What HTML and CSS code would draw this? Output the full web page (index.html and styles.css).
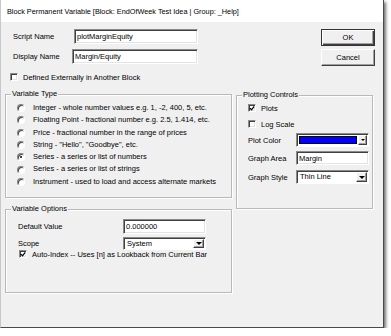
FILE: index.html
```html
<!DOCTYPE html>
<html lang="en">
<head>
  <meta charset="UTF-8">
  <title>Block Permanent Variable</title>
  <link rel="stylesheet" href="styles.css">
</head>
<body>

  <div class="dialog">
    <!-- Title Bar -->
    <div class="titlebar">Block Permanent Variable [Block: EndOfWeek Test Idea | Group: _Help]</div>

    <div class="client">
      <!-- Names + OK/Cancel -->
      <div class="top">
        <div class="names">
          <div class="field script">
            <label class="field-label">Script Name</label>
            <input class="textbox" type="text" value="plotMarginEquity">
          </div>
          <div class="field display">
            <label class="field-label">Display Name</label>
            <input class="textbox" type="text" value="Margin/Equity">
          </div>
        </div>
        <div class="buttons">
          <button class="btn default">OK</button>
          <button class="btn">Cancel</button>
        </div>
      </div>

      <div class="check-row external">
        <span class="checkbox"></span>
        <span>Defined Externally in Another Block</span>
      </div>

      <div class="columns">
        <div class="col-left">
          <!-- Variable Type -->
          <div class="group vtype">
            <div class="group-title">Variable Type</div>
            <ul class="radios">
              <li><span class="radio"></span>Integer - whole number values e.g. 1, -2, 400, 5, etc.</li>
              <li><span class="radio"></span>Floating Point - fractional number e.g. 2.5, 1.414, etc.</li>
              <li><span class="radio"></span>Price - fractional number in the range of prices</li>
              <li><span class="radio"></span>String - "Hello", "Goodbye", etc.</li>
              <li><span class="radio on"></span>Series - a series or list of numbers</li>
              <li><span class="radio"></span>Series - a series or list of strings</li>
              <li><span class="radio"></span>Instrument - used to load and access alternate markets</li>
            </ul>
          </div>

          <!-- Variable Options -->
          <div class="group vopts">
            <div class="group-title">Variable Options</div>
            <div class="opt-row default-row">
              <span class="opt-label">Default Value</span>
              <input class="textbox" type="text" value="0.000000">
            </div>
            <div class="opt-row scope-row">
              <span class="opt-label">Scope</span>
              <div class="combo">
                <span class="combo-text">System</span>
                <span class="drop"><span class="arrow"></span></span>
              </div>
            </div>
            <div class="check-row auto">
              <span class="checkbox checked">
                <svg viewBox="0 0 7 7" width="7" height="7"><path d="M1 3 L3 5 L6 1" fill="none" stroke="#000" stroke-width="1.4"/></svg>
              </span>
              <span>Auto-Index -- Uses [n] as Lookback from Current Bar</span>
            </div>
          </div>
        </div>

        <div class="col-right">
          <!-- Plotting Controls -->
          <div class="group plotting">
            <div class="group-title">Plotting Controls</div>
            <div class="check-row plots">
              <span class="checkbox checked">
                <svg viewBox="0 0 7 7" width="7" height="7"><path d="M1 3 L3 5 L6 1" fill="none" stroke="#000" stroke-width="1.4"/></svg>
              </span>
              <span>Plots</span>
            </div>
            <div class="check-row logscale">
              <span class="checkbox"></span>
              <span>Log Scale</span>
            </div>
            <div class="plot-row color-row">
              <span class="plot-label">Plot Color</span>
              <div class="combo color-combo">
                <span class="swatch"></span>
                <span class="drop thin"><span class="arrow small"></span></span>
              </div>
            </div>
            <div class="plot-row area-row">
              <span class="plot-label">Graph Area</span>
              <input class="textbox" type="text" value="Margin">
            </div>
            <div class="plot-row style-row">
              <span class="plot-label">Graph Style</span>
              <div class="combo">
                <span class="combo-text">Thin Line</span>
                <span class="drop"><span class="arrow"></span></span>
              </div>
            </div>
          </div>
        </div>
      </div>
    </div>
  </div>

</body>
</html>
```

FILE: styles.css
```css
/* Basic Reset */
* {
  margin: 0;
  padding: 0;
  box-sizing: border-box;
}

body {
  background: #fff;
  font-family: "Liberation Sans", Arial, sans-serif;
  font-size: 7.5px;
  color: #000;
}

/* Window */
.dialog {
  width: 384px;
  height: 328px;
  background: #f0f0f0;
  border-left: 1px solid #c8c8c8;
  border-right: 1px solid #4a4a4a;
  border-bottom: 1px solid #4a4a4a;
  box-shadow: 2px 2px 3px rgba(0, 0, 0, 0.55);
  display: flex;
  flex-direction: column;
}

.titlebar {
  height: 22px;
  background: #fff;
  padding-left: 6px;
  line-height: 24px;
  font-size: 7.3px;
  color: #000;
  white-space: nowrap;
  overflow: hidden;
}

.client {
  padding: 7px 8px 0 4px;
}

/* Top area */
.top {
  display: flex;
  height: 37px;
}

.names {
  flex: 1;
}

.field {
  display: flex;
  align-items: center;
  height: 15px;
}

.field.display {
  margin-top: 5px;
}

.field-label {
  width: 60px;
  padding-left: 8px;
  white-space: nowrap;
}

.field.script .textbox {
  margin-left: 9px;
  width: 124px;
}

.field.display .textbox {
  margin-left: 7px;
  width: 126px;
}

.buttons {
  display: flex;
  flex-direction: column;
  width: 54px;
}

/* Classic sunken edit */
.textbox {
  height: 15px;
  font-family: inherit;
  font-size: inherit;
  color: #000;
  background: #fff;
  padding: 0 2px;
  border: 1px solid;
  border-color: #8a8a8a #fff #fff #8a8a8a;
  box-shadow: inset 1px 1px 0 #404040, inset -1px -1px 0 #e3e3e3;
  outline: none;
}

/* Classic raised button */
.btn {
  height: 17px;
  font-family: inherit;
  font-size: inherit;
  background: #f0f0f0;
  border: 1px solid;
  border-color: #fff #404040 #404040 #fff;
  box-shadow: inset -1px -1px 0 #a0a0a0;
}

.btn + .btn {
  margin-top: 3px;
}

.btn.default {
  border: 1px solid #333;
  box-shadow: inset 1px 1px 0 #fff, inset -1px -1px 0 #404040, inset -2px -2px 0 #a0a0a0;
}

/* Checkboxes and radios */
.check-row {
  display: flex;
  align-items: center;
  white-space: nowrap;
}

.checkbox {
  width: 8px;
  height: 8px;
  flex: none;
  background: #fff;
  border: 1px solid;
  border-color: #8a8a8a #fff #fff #8a8a8a;
  box-shadow: inset 1px 1px 0 #404040, inset -1px -1px 0 #e3e3e3;
  display: flex;
  align-items: center;
  justify-content: center;
}

.checkbox svg {
  display: block;
}

.check-row.external {
  height: 10px;
  margin-top: 6px;
  padding-left: 5px;
}

.check-row.external .checkbox {
  margin-right: 5px;
}

.radio {
  display: inline-block;
  width: 8px;
  height: 8px;
  border-radius: 50%;
  background: #fff;
  border: 1px solid;
  border-color: #808080 #fff #fff #808080;
  box-shadow: inset 1px 1px 0 #404040;
  margin-right: 8px;
  position: relative;
  vertical-align: middle;
}

.radio.on::after {
  content: '';
  position: absolute;
  left: 2px;
  top: 2px;
  width: 2px;
  height: 2px;
  border-radius: 50%;
  background: #000;
}

/* Columns */
.columns {
  display: flex;
  gap: 4px;
  margin-top: 12px;
}

.col-left {
  width: 227px;
}

.col-right {
  width: 137px;
  padding-top: 1px;
}

/* Group boxes */
.group {
  border: 1px solid #b9b9b9;
  box-shadow: inset 1px 1px 0 #fff, 1px 1px 0 #fff;
}

.group-title {
  display: table;
  margin: -6px 0 0 5px;
  padding: 0 1px;
  line-height: 10px;
  background: #f0f0f0;
}

.vtype {
  height: 104px;
}

.radios {
  list-style: none;
  padding: 3px 0 0 11px;
}

.radios li {
  height: 12.3px;
  line-height: 12.3px;
  white-space: nowrap;
}

.vopts {
  height: 84px;
  margin-top: 11px;
}

.opt-row {
  display: flex;
  align-items: center;
}

.opt-label {
  width: 117px;
  padding-left: 12px;
}

.default-row {
  margin-top: 5px;
}

.default-row .textbox {
  width: 83px;
}

.scope-row {
  margin-top: 3px;
}

.scope-row .combo {
  width: 83px;
}

.check-row.auto {
  height: 8px;
  margin-top: 0;
  padding-left: 13px;
}

.check-row.auto .checkbox,
.check-row.plots .checkbox,
.check-row.logscale .checkbox {
  margin-right: 5px;
}

/* Combo box */
.combo {
  height: 13px;
  display: flex;
  align-items: stretch;
  background: #fff;
  border: 1px solid;
  border-color: #8a8a8a #fff #fff #8a8a8a;
  box-shadow: inset 1px 1px 0 #404040;
  padding: 1px 1px 1px 1px;
}

.combo-text {
  flex: 1;
  padding-left: 2px;
  line-height: 10px;
}

.drop {
  width: 11px;
  background: #f0f0f0;
  border: 1px solid;
  border-color: #fff #404040 #404040 #fff;
  box-shadow: inset -1px -1px 0 #a0a0a0;
  display: flex;
  align-items: center;
  justify-content: center;
}

.drop.thin {
  width: 9px;
}

.arrow {
  width: 0;
  height: 0;
  border-left: 3px solid transparent;
  border-right: 3px solid transparent;
  border-top: 3px solid #000;
}

.arrow.small {
  border-left-width: 2px;
  border-right-width: 2px;
  border-top-width: 2px;
}

/* Plotting Controls */
.plotting {
  height: 114px;
}

.check-row.plots,
.check-row.logscale {
  height: 16px;
  padding-left: 11px;
}

.plot-row {
  display: flex;
  align-items: center;
  height: 14px;
}

.plot-label {
  width: 59px;
  padding-left: 11px;
  white-space: nowrap;
}

.plot-row .combo,
.plot-row .textbox {
  width: 73px;
  height: 14px;
}

.color-row {
  margin-top: 1px;
}

.swatch {
  flex: 1;
  background: #0000ff;
  margin: 1px 1px 1px 1px;
  border: 1px solid #000;
}

.area-row {
  margin-top: 4px;
}

.style-row {
  margin-top: 5px;
}
```
